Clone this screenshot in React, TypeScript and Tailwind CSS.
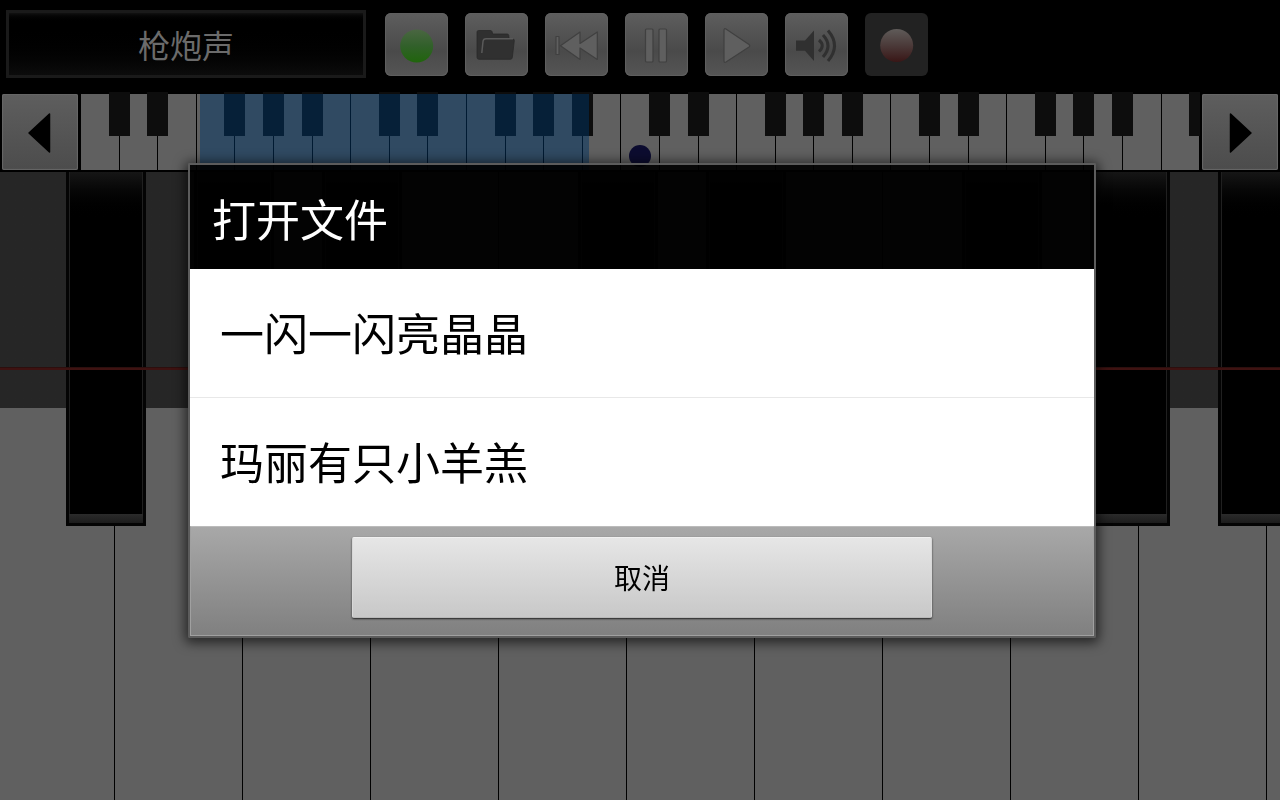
import type { ReactNode } from "react";

const miniBlackAfter = new Set([1, 2, 4, 5, 6, 8, 9, 11, 12, 13, 15, 16, 18, 19, 20, 22, 23, 25, 26, 27, 29]);
const miniKeys = Array.from({ length: 29 }, (_, i) => i + 1);

const keys = [
  { note: "F", sharp: true },
  { note: "G", sharp: true },
  { note: "A", sharp: true },
  { note: "B", sharp: false },
  { note: "C", sharp: true },
  { note: "D", sharp: true },
  { note: "E", sharp: false },
  { note: "F", sharp: true },
  { note: "G", sharp: true },
  { note: "A", sharp: true },
  { note: "B", sharp: false },
];

const songs = ["一闪一闪亮晶晶", "玛丽有只小羊羔"];

function ToolButton({ label, dark = false, children }: { label: string; dark?: boolean; children: ReactNode }) {
  return (
    <button
      type="button"
      aria-label={label}
      className={
        dark
          ? "size-[63px] shrink-0 rounded-md bg-[#222222]"
          : "size-[63px] shrink-0 rounded-md bg-linear-to-b from-[#5e5e5e] via-[#4a4a4a] via-60% to-[#555555] shadow-[inset_0_0_1px_1px_#606060]"
      }
    >
      <svg viewBox="0 0 63 63" className="block size-full" aria-hidden="true">
        {children}
      </svg>
    </button>
  );
}

function Toolbar() {
  return (
    <header className="flex h-[92px] items-start bg-black pl-1.5">
      <button
        type="button"
        className="mt-2.5 mr-[19px] h-[68px] w-[360px] shrink-0 border-[3px] border-[#1a1a1a] bg-linear-to-b from-[#111111] via-black via-15% to-[#0c0c0c] text-[32px] leading-none text-[#6b6b6b]"
      >
        枪炮声
      </button>
      <div className="mt-[13px] flex gap-[17px]">
        <ToolButton label="状态">
          <defs>
            <linearGradient id="green" x1="0" y1="0" x2="0" y2="1">
              <stop offset="0" stopColor="#4a6642" />
              <stop offset="0.5" stopColor="#31602a" />
              <stop offset="1" stopColor="#20650c" />
            </linearGradient>
          </defs>
          <circle cx="31.7" cy="33" r="16.5" fill="url(#green)" />
        </ToolButton>
        <ToolButton label="打开">
          <path
            d="M12 19q0-1.500 1.500-1.500h12q1 0 1.500 1l.7 2.500h14.500q1.300 0 1.500 1.300l.5 4h4q1.300 0 1.100 1.300l-2 17q-.2 1.700-1.800 1.700H14q-2 0-2-2z"
            fill="#303030"
            stroke="#292929"
            strokeWidth="0.8"
          />
          <path d="M16.800 40l1.200-11.500q.3-2.800 3-2.800h27" fill="none" stroke="#5a5a5a" strokeWidth="1.500" />
        </ToolButton>
        <ToolButton label="后退">
          <g fill="#5f5f5f" stroke="#404040" strokeWidth="1.200" strokeLinejoin="round">
            <rect x="11" y="23.500" width="3" height="18" />
            <path d="M15.500 32.700L35 19v11.500L52.300 19v27.500L35 35v11.500z" />
          </g>
        </ToolButton>
        <ToolButton label="暂停">
          <g fill="#5f5f5f" stroke="#404040" strokeWidth="1.200">
            <rect x="20.500" y="16" width="7.500" height="33" rx="1" />
            <rect x="34" y="16" width="7.500" height="33" rx="1" />
          </g>
        </ToolButton>
        <ToolButton label="播放">
          <path
            d="M19 17q0-2 2-1L44 31.500q1.500 1.200 0 2.500L21 49q-2 1-2-1z"
            fill="#5f5f5f"
            stroke="#404040"
            strokeWidth="1.200"
          />
        </ToolButton>
        <ToolButton label="音量">
          <path d="M11 27.500h9l9-10v30.500l-9-10.300h-9z" fill="#303030" />
          <g fill="none" stroke="#303030" strokeWidth="3">
            <path d="M34 27q6.500 5.700 0 11.500" />
            <path d="M38 22q10 10.700 0 22" />
            <path d="M43 17.500q13 15.200 0 30.500" />
          </g>
        </ToolButton>
        <ToolButton label="录音" dark>
          <defs>
            <linearGradient id="red" x1="0" y1="0" x2="0" y2="1">
              <stop offset="0" stopColor="#5f5b59" />
              <stop offset="0.5" stopColor="#4b3a39" />
              <stop offset="1" stopColor="#391616" />
            </linearGradient>
          </defs>
          <circle cx="31.7" cy="32.500" r="16.500" fill="url(#red)" />
        </ToolButton>
      </div>
    </header>
  );
}

function ArrowButton({ label, d }: { label: string; d: string }) {
  return (
    <button
      type="button"
      aria-label={label}
      className="mt-0.5 size-[76px] shrink-0 rounded-xs bg-linear-to-b from-[#5e5e5e] to-[#4c4c4c] shadow-[inset_0_0_1px_1px_#686868]"
    >
      <svg viewBox="0 0 76 76" className="block size-full" aria-hidden="true">
        <path d={d} fill="#000" stroke="#000" strokeWidth="1.500" strokeLinejoin="round" />
      </svg>
    </button>
  );
}

function MiniKeyboard() {
  return (
    <nav className="flex h-20 gap-0.5 bg-black px-0.5">
      <ArrowButton label="向左" d="M27 39L47.500 20v38z" />
      <div className="relative flex h-[78px] min-w-0 flex-1 overflow-hidden pt-0.5">
        {miniKeys.map((k) => (
          <div key={k} className="relative flex-1 border-r border-black bg-[#606060] first:border-l">
            {miniBlackAfter.has(k) && (
              <div className="absolute -top-0.5 -right-[11px] z-10 h-11 w-[21px] bg-[#0d0d0d]" />
            )}
          </div>
        ))}
        <div className="absolute top-0.5 bottom-0 left-[120px] z-20 w-[389px] bg-[rgba(0,52,100,0.5)]" />
        <div className="absolute top-[53px] left-1/2 z-20 size-[22px] -translate-x-1/2 rounded-full bg-[#0c0c30]" />
      </div>
      <ArrowButton label="向右" d="M28.500 20L49 39L28.500 58z" />
    </nav>
  );
}

function BlackKey({ note }: { note: string }) {
  return (
    <button
      type="button"
      aria-label={note + "#"}
      className="absolute top-0 -right-[31px] z-10 flex h-[354px] w-20 flex-col bg-[#040404] px-[3px] pb-[3px]"
    >
      <span className="w-full flex-1 border-x border-[#202020] bg-linear-to-b from-[#161616] to-black to-[50px]" />
      <span className="h-[9px] w-full bg-linear-to-b from-[#2b2b2b] to-[#1c1c1c]" />
    </button>
  );
}

function Keyboard() {
  return (
    <main className="relative flex flex-1 overflow-hidden">
      <div className="-ml-[13px] flex flex-1">
        {keys.map((k, i) => (
          <div key={i} className="relative w-32 shrink-0">
            <button
              type="button"
              aria-label={k.note}
              className="block size-full border-r border-black bg-linear-to-b from-[#262626] from-[236px] to-[#606060] to-[236px]"
            />
            {k.sharp && <BlackKey note={k.note} />}
          </div>
        ))}
      </div>
      <div className="pointer-events-none absolute inset-x-0 top-[195px] z-20 h-[3px] border-t border-[#2c0f0e] bg-[#3e1211]" />
    </main>
  );
}

function OpenFileDialog() {
  return (
    <div className="fixed inset-0 z-30 flex items-center justify-center pl-1">
      <section
        role="dialog"
        aria-modal="true"
        aria-labelledby="dialog-title"
        className="w-[908px] max-w-full rounded-xs border-2 border-[#5c5c5c] shadow-[0_2px_12px_3px_rgba(0,0,0,0.6)]"
      >
        <h1
          id="dialog-title"
          className="flex h-26 items-center bg-black/92 px-[22px] pt-0.5 text-[44px] leading-none font-normal text-white"
        >
          打开文件
        </h1>
        <ul className="divide-y divide-[#e8e8e8] bg-white">
          {songs.map((song) => (
            <li key={song}>
              <button
                type="button"
                className="block h-32 w-full px-[30px] pb-0.5 text-left text-[44px] leading-none text-black"
              >
                {song}
              </button>
            </li>
          ))}
        </ul>
        <div className="flex h-[110px] justify-center border border-t-[#bbbbbb] border-r-[#a0a0a0] border-b-[#a0a0a0] border-l-[#a0a0a0] bg-linear-to-b from-[#a8a8a8] to-[#808080] pt-2.5">
          <button
            type="button"
            className="h-[81px] w-[580px] rounded-xs border border-t-[#f0f0f0] border-r-[#d8d8d8] border-b-[#b8b8b8] border-l-[#d8d8d8] bg-linear-to-b from-[#e6e6e6] to-[#c8c8c8] text-[28px] leading-none text-black shadow-[0_1px_2px_rgba(0,0,0,0.75)]"
          >
            取消
          </button>
        </div>
      </section>
    </div>
  );
}

export default function App() {
  return (
    <div
      lang="zh-CN"
      className="flex min-h-screen flex-col bg-black font-['Noto_Sans_CJK_SC',sans-serif]"
    >
      <Toolbar />
      <MiniKeyboard />
      <Keyboard />
      <OpenFileDialog />
    </div>
  );
}
